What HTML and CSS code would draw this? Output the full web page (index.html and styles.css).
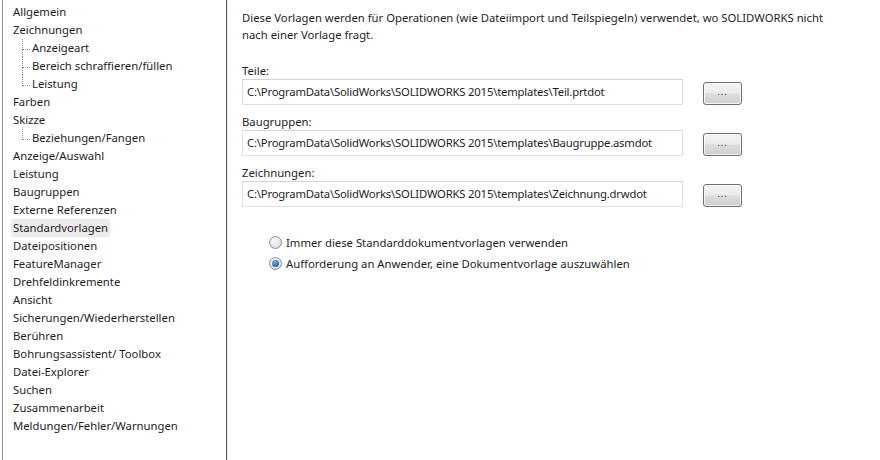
FILE: index.html
```html
<!DOCTYPE html>
<html lang="de">
<head>
  <meta charset="UTF-8" />
  <title>Systemoptionen</title>
  <link rel="stylesheet" href="styles.css">
</head>
<body>
  <div class="dialog">
    <ul class="tree">
      <li>Allgemein</li>
      <li>Zeichnungen</li>
      <li class="sub">Anzeigeart</li>
      <li class="sub">Bereich schraffieren/füllen</li>
      <li class="sub last">Leistung</li>
      <li>Farben</li>
      <li>Skizze</li>
      <li class="sub last">Beziehungen/Fangen</li>
      <li>Anzeige/Auswahl</li>
      <li>Leistung</li>
      <li>Baugruppen</li>
      <li>Externe Referenzen</li>
      <li class="selected"><span>Standardvorlagen</span></li>
      <li>Dateipositionen</li>
      <li>FeatureManager</li>
      <li>Drehfeldinkremente</li>
      <li>Ansicht</li>
      <li>Sicherungen/Wiederherstellen</li>
      <li>Berühren</li>
      <li>Bohrungsassistent/ Toolbox</li>
      <li>Datei-Explorer</li>
      <li>Suchen</li>
      <li>Zusammenarbeit</li>
      <li>Meldungen/Fehler/Warnungen</li>
    </ul>

    <section class="content">
      <p class="intro">Diese Vorlagen werden für Operationen (wie Dateiimport und Teilspiegeln) verwendet, wo SOLIDWORKS nicht nach einer Vorlage fragt.</p>

      <div class="field">
        <label>Teile:</label>
        <div class="field-row">
          <div class="path">C:\ProgramData\SolidWorks\SOLIDWORKS 2015\templates\Teil.prtdot</div>
          <button class="browse">...</button>
        </div>
      </div>

      <div class="field">
        <label>Baugruppen:</label>
        <div class="field-row">
          <div class="path">C:\ProgramData\SolidWorks\SOLIDWORKS 2015\templates\Baugruppe.asmdot</div>
          <button class="browse">...</button>
        </div>
      </div>

      <div class="field">
        <label>Zeichnungen:</label>
        <div class="field-row">
          <div class="path">C:\ProgramData\SolidWorks\SOLIDWORKS 2015\templates\Zeichnung.drwdot</div>
          <button class="browse">...</button>
        </div>
      </div>

      <div class="options">
        <div class="radio"><span class="dot"></span>Immer diese Standarddokumentvorlagen verwenden</div>
        <div class="radio checked"><span class="dot"></span>Aufforderung an Anwender, eine Dokumentvorlage auszuwählen</div>
      </div>
    </section>
  </div>
</body>
</html>
```

FILE: styles.css
```css
* { box-sizing: border-box; }
body {
  margin: 0;
  background: #fff;
  color: #1e1e1e;
  font-family: "Noto Sans", "Open Sans", sans-serif;
  font-size: 11.3px;
}

.dialog {
  display: flex;
  height: 460px;
}

/* tree */
.tree {
  list-style: none;
  margin: 0 0 0 2px;
  padding: 3px 0 0;
  width: 225px;
  border-left: 1px solid #8f8f8f;
  border-right: 1px solid #5a5a5a;
  box-shadow: 1px 0 0 #e2e2e2;
}
.tree li {
  position: relative;
  height: 18px;
  line-height: 18px;
  padding-left: 10px;
  white-space: nowrap;
}
.tree li.sub { padding-left: 29px; }
.tree li.sub::before {
  content: "";
  position: absolute;
  left: 19px;
  top: 0;
  width: 7px;
  height: 10px;
  border-left: 1px dotted #8a8a8a;
  border-bottom: 1px dotted #8a8a8a;
}
.tree li.sub:not(.last)::after {
  content: "";
  position: absolute;
  left: 19px;
  top: 10px;
  bottom: 0;
  border-left: 1px dotted #8a8a8a;
}
.tree li.selected span {
  display: inline-block;
  background: #ececec;
  margin-left: -2px;
  padding: 0 2px;
}

/* content */
.content {
  flex: 1;
  padding: 9px 0 0 15px;
}
.intro {
  margin: 0;
  width: 590px;
  line-height: 17px;
}
.field { margin-top: 8px; }
.field:first-of-type { margin-top: 19px; }
.field label {
  display: block;
  line-height: 17px;
}
.field-row {
  display: flex;
  align-items: flex-start;
  gap: 20px;
}
.path {
  width: 441px;
  height: 26px;
  line-height: 24px;
  padding-left: 4px;
  border: 1px solid #e0e0e0;
  border-top-color: #d3d3d3;
  white-space: nowrap;
  overflow: hidden;
  letter-spacing: -0.2px;
}
.browse {
  margin-top: 3px;
  width: 39px;
  height: 23px;
  padding: 0 0 4px;
  border: 1px solid #707070;
  border-radius: 3px;
  background: linear-gradient(#f4f4f4 0%, #ebebeb 48%, #dddddd 52%, #cfcfcf 100%);
  box-shadow: inset 0 0 0 1px rgba(255,255,255,.7);
  font-family: inherit;
  font-size: 9px;
  color: #333;
  letter-spacing: 1px;
}

.options {
  margin: 25px 0 0 27px;
}
.radio {
  display: flex;
  align-items: center;
  height: 21px;
}
.dot {
  width: 13px;
  height: 13px;
  margin-right: 4px;
  border-radius: 50%;
  border: 1px solid #8e8f8f;
  background: radial-gradient(circle at 40% 35%, #f7f7f7, #d6d6d6);
  position: relative;
}
.radio.checked .dot::after {
  content: "";
  position: absolute;
  left: 2px;
  top: 2px;
  width: 7px;
  height: 7px;
  border-radius: 50%;
  background: radial-gradient(circle at 40% 35%, #6fb6ee, #0f3d7c);
}
```
